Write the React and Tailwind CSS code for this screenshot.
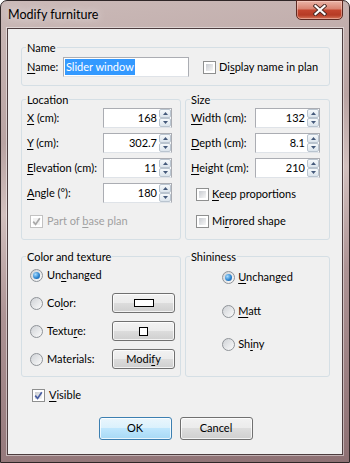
import React from 'react';

// one mnemonic letter underlined, like a Windows label
function Mn({ t, i }) {
  return (
    <>
      {t.slice(0, i)}
      <span className="underline decoration-1 underline-offset-[2px]">{t[i]}</span>
      {t.slice(i + 1)}
    </>
  );
}

function Check({ on, off }) {
  return (
    <span className={`relative w-[13px] h-[13px] shrink-0 border ${off ? 'border-[#c2c2c2]' : 'border-[#8e8f8f]'} bg-white p-[2px] flex`}>
      <span className={`flex-1 ${off ? 'bg-[#f2f2f2]' : 'bg-linear-to-br from-[#c9ccd1] to-[#f7f7f7]'}`} />
      {on && (
        <svg className="absolute left-[1px] top-[1px]" width="9" height="9" viewBox="0 0 9 9">
          <path d="M1.2 4.6 L3.6 7.4 L7.8 1.2" fill="none" stroke={off ? '#a9a9a9' : '#4a5fa3'} strokeWidth="1.7" />
        </svg>
      )}
    </span>
  );
}

function Radio({ on }) {
  return (
    <span className="w-[13px] h-[13px] shrink-0 rounded-full border border-[#8f9398] bg-linear-to-br from-[#cfd2d6] to-[#fbfbfb] flex items-center justify-center">
      {on && <span className="w-[7px] h-[7px] rounded-full bg-[radial-gradient(circle_at_35%_35%,#a8dcff,#2f86d0_55%,#0f4f98)]" />}
    </span>
  );
}

function SpinBtn({ up }) {
  return (
    <span className="flex-1 flex items-center justify-center border border-[#b9c4cf] rounded-[2px] bg-[linear-gradient(#f6f9fb,#dbe4ec)]">
      <svg width="5" height="3" viewBox="0 0 5 3">
        <path d={up ? 'M0 3 L2.5 0 L5 3Z' : 'M0 0 L2.5 3 L5 0Z'} fill="#44597a" />
      </svg>
    </span>
  );
}

function Spin({ v, w }) {
  return (
    <div className={`${w} h-[20px] flex border border-[#abadb3] border-b-[#dfe3e8] bg-white`}>
      <span className="flex-1 text-right pr-[2px] leading-[18px]">{v}</span>
      <div className="w-[12px] flex flex-col">
        <SpinBtn up />
        <SpinBtn />
      </div>
    </div>
  );
}

function Btn({ w, h, def, children }) {
  return (
    <div
      className={`${w} ${h} rounded-[3px] border ${
        def
          ? 'border-[#3c7fb1] bg-[linear-gradient(#eaf6fd,#d9f0fc_50%,#bee6fd_50%,#a7d9f5)]'
          : 'border-[#707070] bg-[linear-gradient(#f2f2f2,#ebebeb_50%,#dddddd_50%,#cfcfcf)]'
      } shadow-[inset_0_0_0_1px_rgba(255,255,255,0.75)] flex items-center justify-center`}
    >
      {children}
    </div>
  );
}

function Row({ label, children }) {
  return (
    <div className="h-[20px] flex items-center justify-between">
      <span>{label}</span>
      {children}
    </div>
  );
}

export default function App() {
  return (
    <div className="w-[350px] h-[463px] overflow-hidden font-['Lato',sans-serif] text-[11px] whitespace-nowrap text-black">
      <div className="w-full h-full flex flex-col rounded-t-[7px] border border-[#2f2627] bg-[linear-gradient(172deg,#cbbab8_0%,#b9a3a2_28%,#d2c0be_42%,#ad9394_62%,#8d7073_100%)] px-[6px] pb-[7px]">
        {/* Title bar */}
        <div className="h-[27px] flex items-start shrink-0">
          <span className="pl-[1px] mt-[6px] text-[12.5px] leading-[16px] [text-shadow:0_0_8px_rgba(255,255,255,0.9)]">Modify furniture</span>
          <div className="ml-auto -mt-px w-[47px] h-[20px] rounded-b-[5px] border border-[#5e2a22] bg-[linear-gradient(#eab4a7,#d98573_42%,#c3452e_52%,#b63b25_78%,#d67559)] shadow-[inset_0_0_0_1px_rgba(255,220,210,0.45)] flex items-center justify-center">
            <svg width="14" height="12" viewBox="0 0 14 12">
              <path d="M2.5 2 L11.5 10 M11.5 2 L2.5 10" stroke="#4a2a24" strokeWidth="4" strokeLinecap="square" />
              <path d="M2.5 2 L11.5 10 M11.5 2 L2.5 10" stroke="#ffffff" strokeWidth="2.2" strokeLinecap="square" />
            </svg>
          </div>
        </div>

        {/* Client area */}
        <div className="flex-1 flex flex-col border border-[#4d3d3f] bg-[#f0f0f0] shadow-[0_0_0_1px_rgba(255,255,255,0.45)] pt-[11px] pl-[13px] pr-[12px]">
          <fieldset className="border border-[#d5dfe5] rounded-[3px] pl-[5px] pr-[5px] pt-[2px] pb-[8px]">
            <legend className="px-px -ml-px leading-[15px]">Name</legend>
            <div className="h-[20px] flex items-center">
              <span className="w-[36px]"><Mn t="Name:" i={0} /></span>
              <div className="w-[126px] h-[20px] border border-[#abadb3] border-b-[#dfe3e8] bg-white flex items-center pl-px">
                <span className="bg-[#3399ff] text-white px-px leading-[16px]">Slider window</span>
              </div>
              <span className="ml-[14px]"><Check /></span>
              <span className="ml-[3px]"><Mn t="Display name in plan" i={2} /></span>
            </div>
          </fieldset>

          <div className="flex gap-[4px] mt-[6px]">
            <fieldset className="w-[160px] border border-[#d5dfe5] rounded-[3px] pl-[5px] pr-[8px] pt-px pb-[8px]">
              <legend className="px-px -ml-px leading-[15px]">Location</legend>
              <div className="flex flex-col gap-[5px]">
                <Row label={<Mn t="X (cm):" i={0} />}><Spin v="168" w="w-[69px]" /></Row>
                <Row label={<Mn t="Y (cm):" i={0} />}><Spin v="302.7" w="w-[69px]" /></Row>
                <Row label={<Mn t="Elevation (cm):" i={0} />}><Spin v="11" w="w-[69px]" /></Row>
                <Row label={<Mn t="Angle (°):" i={0} />}><Spin v="180" w="w-[69px]" /></Row>
              </div>
              <div className="mt-[8px] h-[20px] flex items-center pl-[3px] gap-[4px] text-[#a0a0a0]">
                <Check on off />
                <span><Mn t="Part of base plan" i={8} /></span>
              </div>
            </fieldset>

            <fieldset className="flex-1 border border-[#d5dfe5] rounded-[3px] pl-[5px] pr-[9px] pt-px pb-[8px]">
              <legend className="px-px -ml-px leading-[15px]">Size</legend>
              <div className="flex flex-col gap-[5px]">
                <Row label={<Mn t="Width (cm):" i={0} />}><Spin v="132" w="w-[65px]" /></Row>
                <Row label={<Mn t="Depth (cm):" i={0} />}><Spin v="8.1" w="w-[65px]" /></Row>
                <Row label={<Mn t="Height (cm):" i={0} />}><Spin v="210" w="w-[65px]" /></Row>
              </div>
              <div className="mt-[6px] h-[20px] flex items-center pl-[5px] gap-[3px]">
                <Check />
                <span><Mn t="Keep proportions" i={0} /></span>
              </div>
              <div className="mt-[7px] h-[20px] flex items-center pl-[5px] gap-[3px]">
                <Check />
                <span><Mn t="Mirrored shape" i={2} /></span>
              </div>
            </fieldset>
          </div>

          <div className="flex gap-[4px] mt-[9px]">
            <fieldset className="w-[160px] border border-[#d5dfe5] rounded-[3px] pl-[8px] pr-[5px] pt-px pb-[7px]">
              <legend className="-ml-[4px] px-px leading-[15px]">Color and texture</legend>
              <div className="flex flex-col gap-[8px]">
                <div className="h-[20px] flex items-center gap-[4px]">
                  <Radio on />
                  <span><Mn t="Unchanged" i={2} /></span>
                </div>
                <div className="h-[20px] flex items-center gap-[4px]">
                  <Radio />
                  <span><Mn t="Color:" i={2} /></span>
                  <span className="ml-auto">
                    <Btn w="w-[63px]" h="h-[20px]">
                      <span className="w-[20px] h-[8px] border border-black bg-white" />
                    </Btn>
                  </span>
                </div>
                <div className="h-[20px] flex items-center gap-[4px]">
                  <Radio />
                  <span><Mn t="Texture:" i={5} /></span>
                  <span className="ml-auto">
                    <Btn w="w-[63px]" h="h-[20px]">
                      <span className="w-[9px] h-[9px] border border-black bg-white" />
                    </Btn>
                  </span>
                </div>
                <div className="h-[20px] flex items-center gap-[4px]">
                  <Radio />
                  <span>Materials:</span>
                  <span className="ml-auto">
                    <Btn w="w-[63px]" h="h-[20px]">
                      <span><Mn t="Modify" i={4} /></span>
                    </Btn>
                  </span>
                </div>
              </div>
            </fieldset>

            <fieldset className="flex-1 border border-[#d5dfe5] rounded-[3px] pl-[5px] pr-[5px] pt-[3px]">
              <legend className="px-px -ml-px leading-[15px]">Shininess</legend>
              <div className="flex justify-center">
                <div className="flex flex-col">
                  <div className="h-[20px] flex items-center gap-[3px]">
                    <Radio on />
                    <span><Mn t="Unchanged" i={0} /></span>
                  </div>
                  <div className="mt-[14px] h-[20px] flex items-center gap-[3px]">
                    <Radio />
                    <span><Mn t="Matt" i={0} /></span>
                  </div>
                  <div className="mt-[13px] h-[20px] flex items-center gap-[3px]">
                    <Radio />
                    <span><Mn t="Shiny" i={2} /></span>
                  </div>
                </div>
              </div>
            </fieldset>
          </div>

          <div className="mt-[8px] ml-[11px] h-[20px] flex items-center gap-[4px]">
            <Check on />
            <span><Mn t="Visible" i={0} /></span>
          </div>

          <div className="mt-[12px] flex justify-center gap-[8px]">
            <Btn w="w-[73px]" h="h-[23px]" def>OK</Btn>
            <Btn w="w-[73px]" h="h-[23px]">Cancel</Btn>
          </div>
        </div>
      </div>
    </div>
  );
}
